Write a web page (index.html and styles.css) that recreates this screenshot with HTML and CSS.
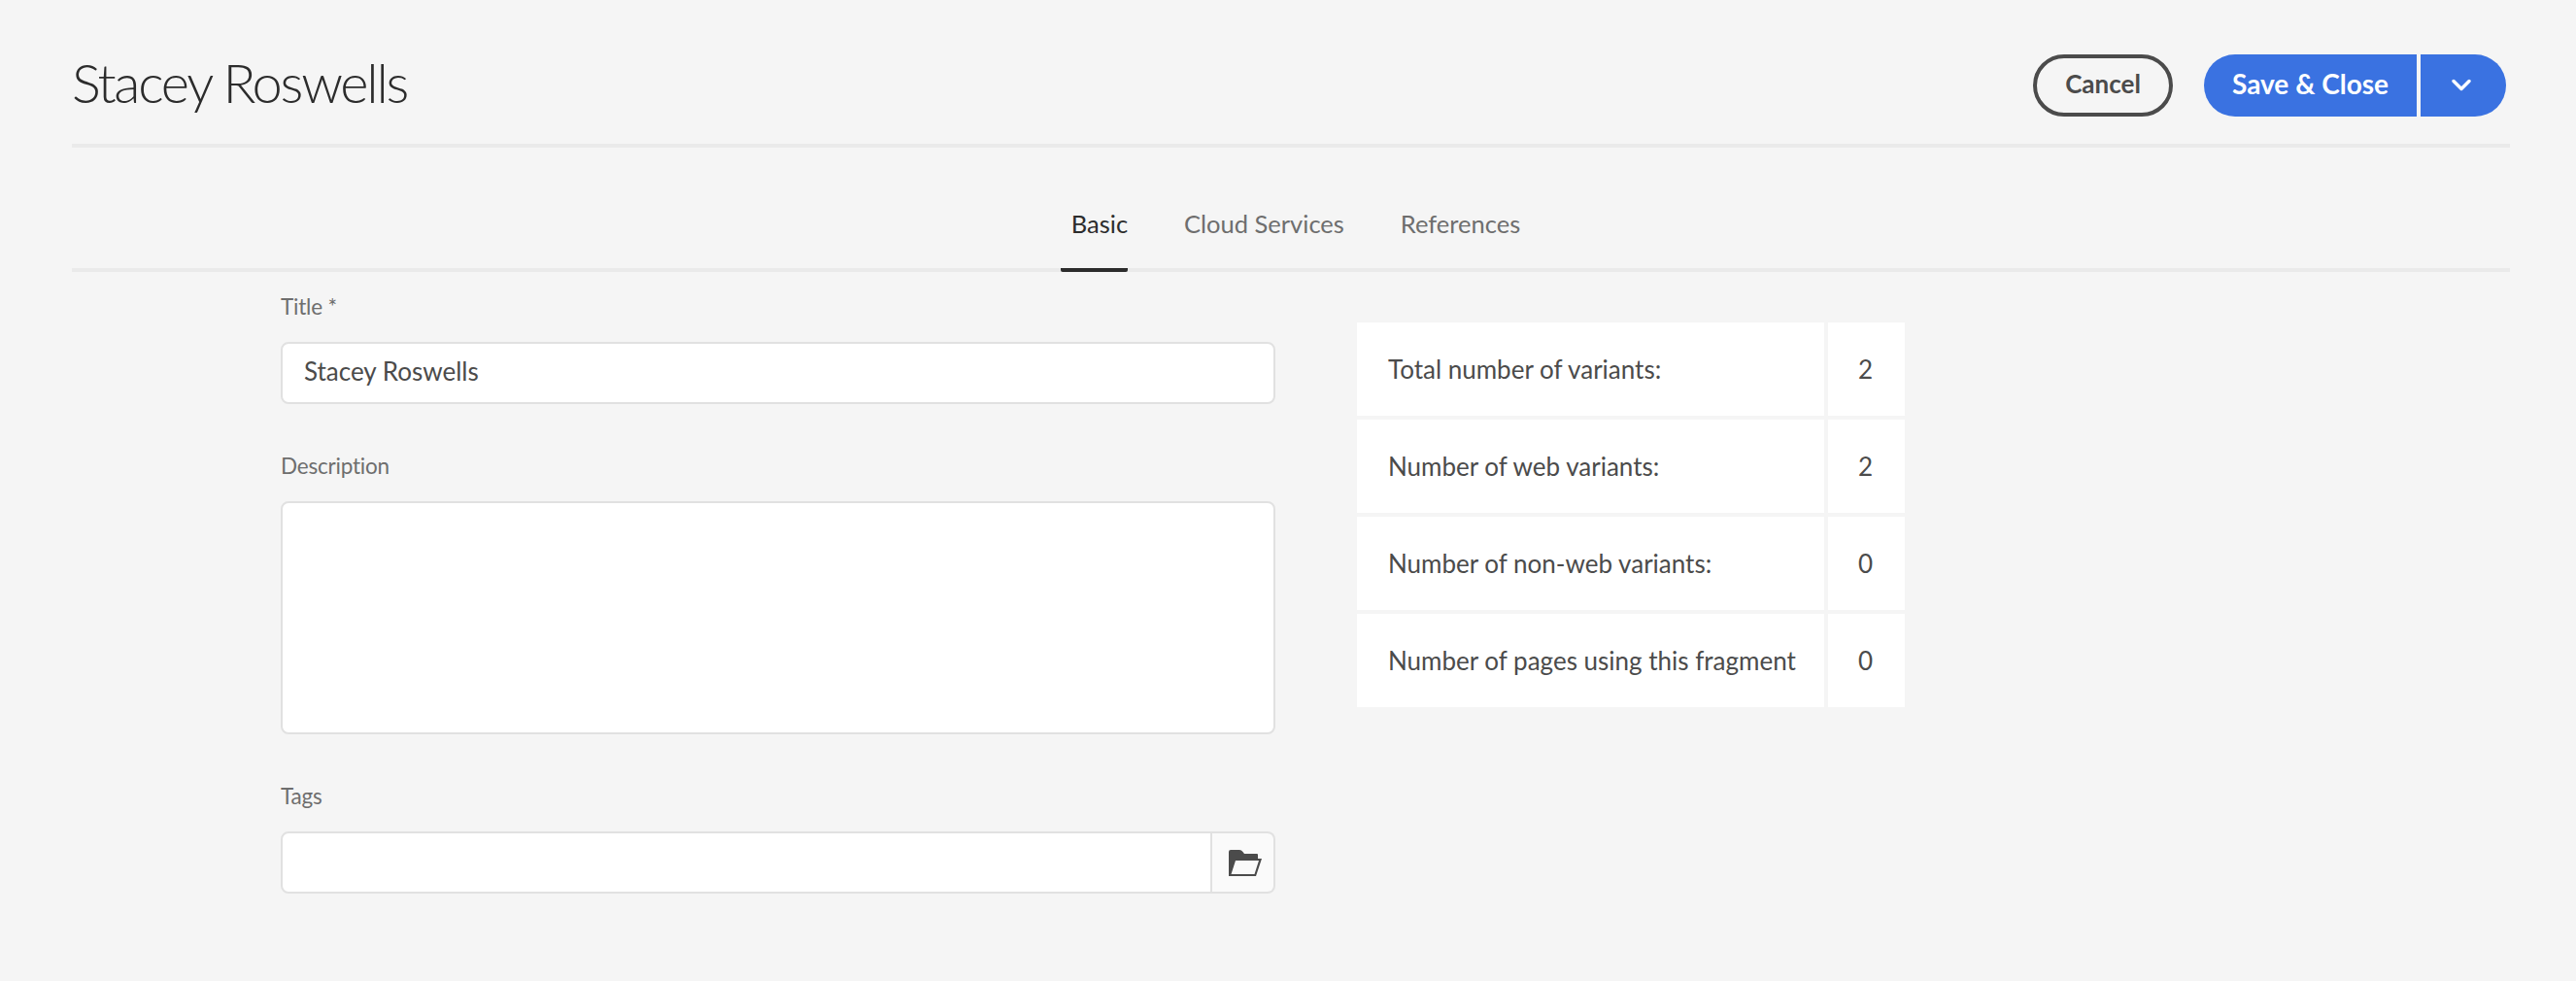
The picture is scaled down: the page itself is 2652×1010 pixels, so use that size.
FILE: index.html
```html
<!DOCTYPE html>
<html lang="en">
<head>
<meta charset="utf-8">
<title>Stacey Roswells</title>
<link rel="stylesheet" href="styles.css">
</head>
<body>
<div class="page">
  <header class="header">
    <h1 class="title">Stacey Roswells</h1>
    <div class="actions">
      <button class="btn-cancel"><span class="btn-text">Cancel</span></button>
      <div class="split">
        <button class="btn-save"><span class="btn-text">Save &amp; Close</span></button>
        <button class="btn-more" aria-label="More">
          <svg width="20" height="14" viewBox="0 0 20 14"><path d="M2 2.5 L10 10.5 L18 2.5" fill="none" stroke="#fff" stroke-width="3.4" stroke-linecap="round" stroke-linejoin="round"/></svg>
        </button>
      </div>
    </div>
  </header>
  <nav class="tabs">
    <a class="tab active">Basic</a>
    <a class="tab">Cloud Services</a>
    <a class="tab">References</a>
  </nav>
  <main class="content">
    <form class="form">
      <label class="label label-first">Title *</label>
      <div class="input input-text">Stacey Roswells</div>
      <label class="label">Description</label>
      <div class="input textarea"></div>
      <label class="label">Tags</label>
      <div class="tagfield">
        <div class="input tag-input"></div>
        <button type="button" class="tag-btn" aria-label="Browse">
          <svg width="34" height="27" viewBox="0 0 34 27"><path fill-rule="evenodd" fill="#4b4b4b" d="M0 2 Q0 0 2 0 H11 Q13 0 14.5 2 L16 4 H29 Q30 4 30 5 V9 H34 L28 27 H0 Z M7 11 L2.5 25 H26.5 L31 11 Z"/></svg>
        </button>
      </div>
    </form>
    <section class="stats">
      <div class="cell">Total number of variants:</div><div class="cell num">2</div>
      <div class="cell">Number of web variants:</div><div class="cell num">2</div>
      <div class="cell">Number of non-web variants:</div><div class="cell num">0</div>
      <div class="cell">Number of pages using this fragment</div><div class="cell num">0</div>
    </section>
  </main>
</div>
</body>
</html>
```
FILE: styles.css
```css
* { box-sizing: border-box; }
html, body { margin: 0; height: 100%; background: #f5f5f5; overflow: hidden; }
body { font-family: "Lato", "Open Sans", sans-serif; color: #4b4b4b; }
.page { padding: 0 68px 0 74px; }
.header {
  height: 152px;
  border-bottom: 4px solid #eaeaea;
  display: flex;
  justify-content: space-between;
  align-items: flex-start;
  padding-top: 53px;
}
.title { margin: 0; font-size: 56px; line-height: 64px; font-weight: 300; color: #2c2c2c; letter-spacing: -2.25px; }
.actions { display: flex; gap: 32px; padding-right: 4px; margin-top: 3px; }
button { font-family: inherit; cursor: pointer; }
.btn-text { display: block; margin-top: -4px; }
.btn-cancel {
  width: 144px; height: 64px; border: 4px solid #4b4b4b; border-radius: 32px;
  background: transparent; color: #4b4b4b; font-size: 26px; font-weight: 700; padding: 0;
}
.split { display: flex; gap: 4px; }
.btn-save, .btn-more { height: 64px; border: 0; background: #3a72e1; color: #fff; padding: 0; }
.btn-save { width: 219px; border-radius: 32px 0 0 32px; font-size: 28px; font-weight: 700; }
.btn-more { width: 88px; border-radius: 0 32px 32px 0; display: flex; align-items: center; justify-content: center; padding-right: 4px; }
.tabs {
  height: 128px;
  border-bottom: 4px solid #eaeaea;
  display: flex;
  justify-content: center;
  gap: 58px;
  padding-right: 1px;
}
.tab { height: 128px; padding: 60px 0 0; font-size: 25.5px; line-height: 36px; color: #6e6e6e; }
.tab.active { color: #2c2c2c; border-bottom: 4px solid #2c2c2c; border-radius: 2px; padding-left: 11px; }
.content { display: flex; align-items: flex-start; padding-left: 215px; }
.form { width: 1024px; display: flex; flex-direction: column; }
.label { font-size: 22.5px; line-height: 32px; color: #6e6e6e; height: 32px; margin-top: 48px; margin-bottom: 20px; letter-spacing: -0.2px; }
.label-first { margin-top: 20px; margin-bottom: 20px; }
.input { background: #fff; border: 2px solid #e1e1e1; border-radius: 8px; }
.input-text { height: 64px; padding: 0 22px; font-size: 26px; line-height: 56px; color: #4b4b4b; }
.textarea { height: 240px; }
.tagfield { display: flex; height: 64px; }
.tag-input { flex: 1; border-radius: 8px 0 0 8px; }
.tag-btn {
  width: 65px; height: 64px; background: #fafafa; border: 2px solid #e1e1e1; border-left: 0;
  border-radius: 0 8px 8px 0; padding: 0 0 0 4px; display: flex; align-items: center; justify-content: center;
}
.stats {
  margin: 52px 0 0 84px;
  display: grid;
  grid-template-columns: 481px 79px;
  grid-auto-rows: 96px;
  gap: 4px;
}
.cell { background: #fff; display: flex; align-items: center; padding-left: 32px; font-size: 26px; color: #4b4b4b; }
.num { padding: 0 2px 0 0; justify-content: center; }
```
